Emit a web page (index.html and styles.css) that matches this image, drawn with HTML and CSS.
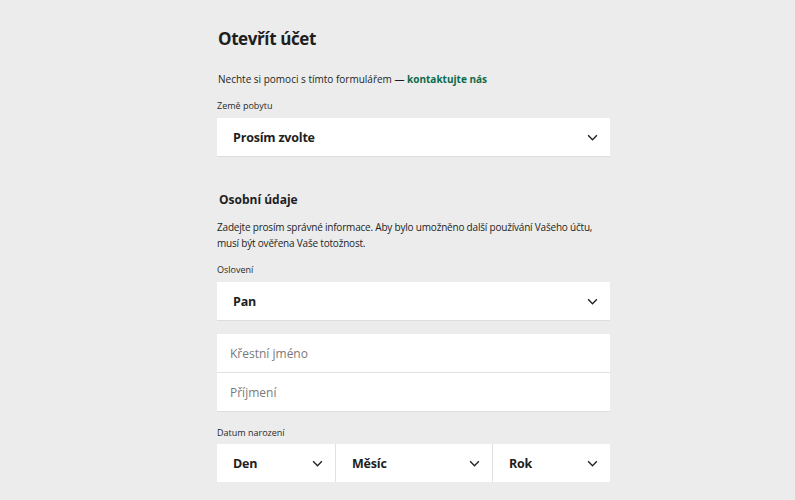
FILE: index.html
```html
<!DOCTYPE html>
<html lang="cs">
<head>
<meta charset="utf-8">
<link rel="stylesheet" href="styles.css">
</head>
<body>
<main class="form">
  <h1 class="title">Otevřít účet</h1>
  <p class="help">Nechte si pomoci s tímto formulářem — <a class="link" href="#">kontaktujte nás</a></p>
  <div class="label">Země pobytu</div>
  <div class="select"><span>Prosím zvolte</span><svg class="chev" viewBox="0 0 12 8"><path d="M1 1.5l5 5 5-5"/></svg></div>

  <h2 class="section">Osobní údaje</h2>
  <p class="desc">Zadejte prosím správné informace. Aby bylo umožněno další používání Vašeho účtu, musí být ověřena Vaše totožnost.</p>
  <div class="label">Oslovení</div>
  <div class="select"><span>Pan</span><svg class="chev" viewBox="0 0 12 8"><path d="M1 1.5l5 5 5-5"/></svg></div>

  <div class="inputs">
    <div class="input">Křestní jméno</div>
    <div class="input">Příjmení</div>
  </div>

  <div class="label label-date">Datum narození</div>
  <div class="date">
    <div class="select cell"><span>Den</span><svg class="chev" viewBox="0 0 12 8"><path d="M1 1.5l5 5 5-5"/></svg></div>
    <div class="select cell"><span>Měsíc</span><svg class="chev" viewBox="0 0 12 8"><path d="M1 1.5l5 5 5-5"/></svg></div>
    <div class="select cell"><span>Rok</span><svg class="chev" viewBox="0 0 12 8"><path d="M1 1.5l5 5 5-5"/></svg></div>
  </div>
</main>
</body>
</html>
```
FILE: styles.css
```css
html, body {
  margin: 0;
  padding: 0;
  background: #ebeceb;
  font-family: "Open Sans", "Noto Sans", sans-serif;
  color: #1e1e1e;
}
.form {
  width: 393px;
  margin-left: 217px;
  padding-top: 26px;
}
.title {
  margin: 0 0 0 1px;
  font-size: 17px;
  font-weight: 700;
  line-height: 26px;
  letter-spacing: -0.4px;
}
.help {
  margin: 19px 0 0 1px;
  font-size: 10px;
  line-height: 16px;
}
.link {
  color: #0b6b4d;
  font-weight: 700;
  text-decoration: none;
}
.label {
  font-size: 9px;
  line-height: 14px;
  margin-top: 12px;
  color: #2a2a2a;
}
.select {
  display: flex;
  align-items: center;
  justify-content: space-between;
  height: 38px;
  margin-top: 5px;
  padding: 0 12px 0 16px;
  background: #fff;
  box-shadow: 0 1px 0 #dcdddc;
  font-size: 12.5px;
  font-weight: 700;
  letter-spacing: -0.2px;
  box-sizing: border-box;
}
.chev {
  width: 11px;
  height: 7px;
  fill: none;
  stroke: #222;
  stroke-width: 1.6;
}
.section {
  margin: 35px 0 0 2px;
  font-size: 12px;
  font-weight: 700;
  line-height: 18px;
}
.desc {
  margin: 10px 0 0 0;
  font-size: 10px;
  line-height: 16px;
  letter-spacing: -0.2px;
}
.inputs {
  margin-top: 14px;
  display: flex;
  flex-direction: column;
  gap: 1px;
  background: #e0e1e0;
  box-shadow: 0 1px 0 #dcdddc;
}
.input {
  height: 38px;
  display: flex;
  align-items: center;
  padding-left: 13px;
  background: #fff;
  color: #7a7a7a;
  font-size: 12px;
}
.label-date {
  margin-top: 15px;
}
.date {
  display: flex;
  gap: 1px;
  margin-top: 4px;
  background: #e0e1e0;
}
.date .cell {
  margin-top: 0;
}
.date .cell:nth-child(1) { width: 118px; }
.date .cell:nth-child(2) { width: 156px; }
.date .cell:nth-child(3) { flex: 1; }
```
